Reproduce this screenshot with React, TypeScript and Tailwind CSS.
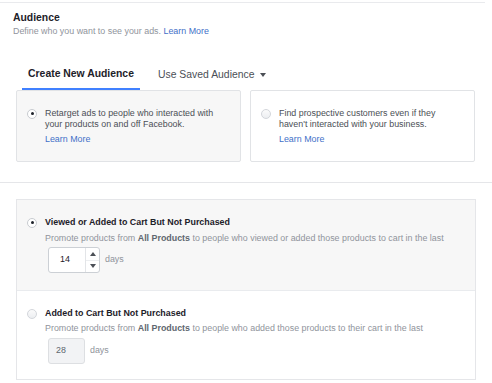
import React from 'react';

function Radio({ checked }: { checked: boolean }) {
  return checked ? (
    <span className="flex h-[10px] w-[10px] shrink-0 items-center justify-center rounded-full border border-[#c8cbd0] bg-white">
      <span className="h-[3px] w-[3px] rounded-full bg-[#1d2129]" />
    </span>
  ) : (
    <span className="block h-[10px] w-[10px] shrink-0 rounded-full border border-[#d3d6db] bg-gradient-to-b from-[#fbfbfb] to-[#eceef1]" />
  );
}

function ChoiceCard({ checked, lines }: { checked: boolean; lines: string[] }) {
  return (
    <div
      className={
        'h-[72px] rounded-[2px] border border-[#e1e3e6] pl-[10px] pt-[17px] ' +
        (checked ? 'bg-[#f7f7f7]' : 'bg-white')
      }
    >
      <div className="flex items-start gap-[8px]">
        <div className="pt-[0.5px]">
          <Radio checked={checked} />
        </div>
        <div className="text-[8.9px] leading-[11px] text-[#4b4f56]">
          <div>{lines[0]}</div>
          <div>{lines[1]}</div>
          <div className="mt-[4px] text-[#4270c8]">Learn More</div>
        </div>
      </div>
    </div>
  );
}

function Stepper() {
  return (
    <div className="flex h-[26px] w-[52px] rounded-[3px] border border-[#ccd0d5] bg-white">
      <div className="flex flex-1 items-center pl-[11px] text-[8.9px] text-[#1d2129]">14</div>
      <div className="flex w-[14px] flex-col border-l border-[#e3e5e8]">
        <div className="flex flex-1 items-center justify-center">
          <span className="h-0 w-0 border-x-[3px] border-b-[4px] border-x-transparent border-b-[#4b4f56]" />
        </div>
        <div className="flex flex-1 items-center justify-center border-t border-[#eceef0]">
          <span className="h-0 w-0 border-x-[3px] border-t-[4px] border-x-transparent border-t-[#4b4f56]" />
        </div>
      </div>
    </div>
  );
}

export default function App() {
  return (
    <div className="h-[383px] w-[492px] overflow-hidden bg-white font-['Liberation_Sans',Arial,sans-serif]">
      {/* top rule */}
      <div className="mt-[2px] mr-[7px] border-t border-[#e9eaed]" />

      {/* Header */}
      <div className="pl-[13px] pt-[9px]">
        <div className="text-[10.4px] font-bold leading-[12px] text-[#1d2129]">Audience</div>
        <div className="mt-[1px] text-[8.9px] leading-[12px] text-[#90949c]">
          Define who you want to see your ads. <span className="text-[#4270c8]">Learn More</span>
        </div>
      </div>

      {/* Tabs */}
      <div className="mt-[23px] flex pl-[22px]">
        <div className="flex h-[30px] w-[118px] items-center justify-center border-b-2 border-[#4080ff] text-[10.4px] font-bold text-[#1d2129]">
          Create New Audience
        </div>
        <div className="flex h-[30px] items-center gap-[6px] pl-[18px] text-[10.4px] text-[#4b4f56]">
          Use Saved Audience
          <span className="h-0 w-0 border-x-[3px] border-t-[4px] border-x-transparent border-t-[#4b4f56]" />
        </div>
      </div>

      {/* Cards */}
      <div className="mx-4 grid w-[459px] grid-cols-2 gap-[9px]">
        <ChoiceCard
          checked
          lines={['Retarget ads to people who interacted with', 'your products on and off Facebook.']}
        />
        <ChoiceCard
          checked={false}
          lines={['Find prospective customers even if they', "haven't interacted with your business."]}
        />
      </div>

      <div className="mt-[20px] border-t border-[#e5e6e9]" />

      {/* Retargeting options */}
      <div className="mx-4 mt-[16px] w-[460px] border border-[#e5e6e9]">
        <div className="border-b border-[#e9ebee] bg-[#f7f7f7] pl-[10px] pt-[17px] pb-[17px]">
          <div className="flex items-center gap-[8px]">
            <Radio checked />
            <div className="text-[8.9px] font-bold leading-[11px] text-[#1d2129]">
              Viewed or Added to Cart But Not Purchased
            </div>
          </div>
          <div className="mt-[5px] pl-[18px] text-[8.9px] leading-[11px] whitespace-nowrap text-[#90949c]">
            Promote products from <span className="font-bold text-[#606770]">All Products</span> to people who viewed or added those products to cart in the last
          </div>
          <div className="mt-[3px] flex items-center gap-[5px] pl-[21px]">
            <Stepper />
            <span className="text-[8.9px] text-[#90949c]">days</span>
          </div>
        </div>

        <div className="bg-white pl-[10px] pt-[17px] pb-[15px]">
          <div className="flex items-center gap-[8px]">
            <Radio checked={false} />
            <div className="text-[8.9px] font-bold leading-[11px] text-[#1d2129]">
              Added to Cart But Not Purchased
            </div>
          </div>
          <div className="mt-[4px] pl-[18px] text-[8.9px] leading-[11px] whitespace-nowrap text-[#90949c]">
            Promote products from <span className="font-bold text-[#606770]">All Products</span> to people who added those products to their cart in the last
          </div>
          <div className="mt-[4px] flex items-center gap-[5px] pl-[21px]">
            <div className="flex h-[26px] w-[37px] items-center rounded-[3px] border border-[#dddfe2] bg-[#f2f3f5] pl-[7px] text-[8.9px] text-[#606770]">
              28
            </div>
            <span className="text-[8.9px] text-[#90949c]">days</span>
          </div>
        </div>
      </div>
    </div>
  );
}
